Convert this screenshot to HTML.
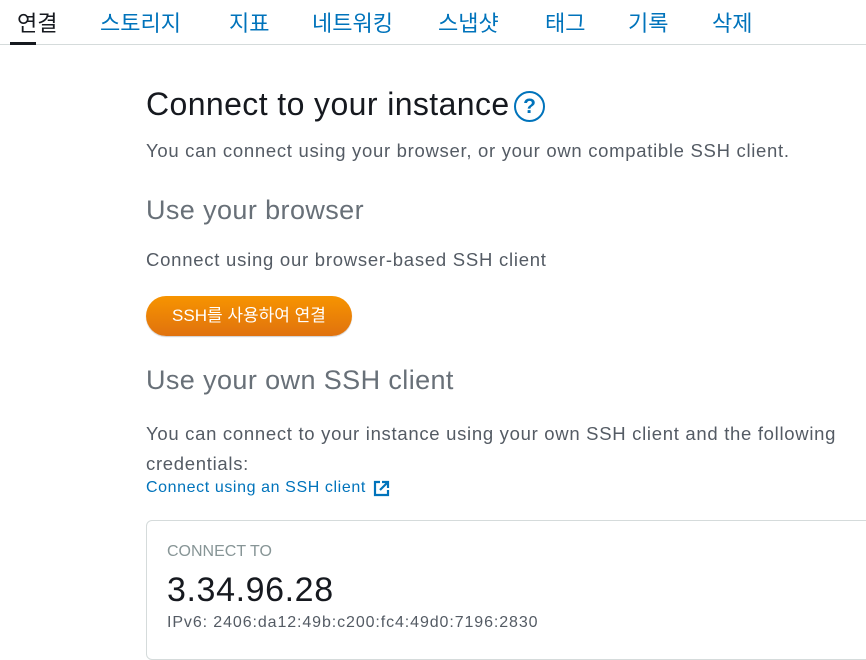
<!DOCTYPE html>
<html><head><meta charset="utf-8"><style>
body{margin:0;width:866px;height:636px;overflow:hidden;background:#fff;font-family:"Liberation Sans","Noto Sans CJK KR",sans-serif;position:relative}
.a{position:absolute;white-space:nowrap}
.tab{position:absolute;top:6px;font-size:22px;color:#0073bb}
</style></head><body>
<div class="tab" style="left:17px;color:#16191f">연결</div>
<div class="tab" style="left:100px">스토리지</div>
<div class="tab" style="left:229px">지표</div>
<div class="tab" style="left:312px">네트워킹</div>
<div class="tab" style="left:438px">스냅샷</div>
<div class="tab" style="left:545px">태그</div>
<div class="tab" style="left:628px">기록</div>
<div class="tab" style="left:712px">삭제</div>
<div class="a" style="left:0;top:44px;width:866px;height:1px;background:#d5dbdb"></div>
<div class="a" style="left:10px;top:42px;width:26px;height:3px;background:#16191f"></div>

<div class="a" style="left:146px;top:86px;font-size:32px;color:#16191f;letter-spacing:0.4px">Connect to your instance</div>
<div class="a" style="left:514px;top:91px;width:31px;height:31px;border:2px solid #0073bb;border-radius:50%;box-sizing:border-box;color:#0073bb;font-size:21px;font-weight:bold;text-align:center;line-height:27px">?</div>
<div class="a" style="left:146px;top:140px;font-size:18.5px;color:#545b64;letter-spacing:0.7px">You can connect using your browser, or your own compatible SSH client.</div>

<div class="a" style="left:146px;top:195px;font-size:27px;color:#687078;letter-spacing:0.4px">Use your browser</div>
<div class="a" style="left:146px;top:249px;font-size:18.5px;color:#545b64;letter-spacing:0.75px">Connect using our browser-based SSH client</div>

<div class="a" style="left:146px;top:296px;width:206px;height:40px;border-radius:20px;background:linear-gradient(#f79400,#e0720e);box-shadow:0 1px 1px rgba(0,0,0,.2);color:#fff;font-size:17px;text-align:center;line-height:40px">SSH를 사용하여 연결</div>

<div class="a" style="left:146px;top:365px;font-size:27px;color:#687078;letter-spacing:0.4px">Use your own SSH client</div>
<div class="a" style="left:146px;top:419px;font-size:18.5px;color:#545b64;letter-spacing:0.7px;line-height:30px;white-space:normal;width:715px">You can connect to your instance using your own SSH client and the following credentials:</div>
<div class="a" style="left:146px;top:479px;font-size:16px;color:#0073bb;letter-spacing:0.6px">Connect using an SSH client</div>
<svg class="a" style="left:373px;top:480px" width="17" height="17" viewBox="0 0 17 17"><path d="M7 2H2v13h13v-5" fill="none" stroke="#0073bb" stroke-width="2.2"/><path d="M9 2h6v6M15 2L7 10" fill="none" stroke="#0073bb" stroke-width="2.2"/></svg>

<div class="a" style="left:146px;top:520px;width:740px;height:140px;border:1px solid #d5dbdb;border-radius:6px;box-sizing:border-box"></div>
<div class="a" style="left:167px;top:543px;font-size:16px;color:#879596">CONNECT TO</div>
<div class="a" style="left:167px;top:571px;font-size:34px;color:#16191f;letter-spacing:0.6px">3.34.96.28</div>
<div class="a" style="left:167px;top:614px;font-size:16px;color:#545b64;letter-spacing:0.9px">IPv6: 2406:da12:49b:c200:fc4:49d0:7196:2830</div>
</body></html>
